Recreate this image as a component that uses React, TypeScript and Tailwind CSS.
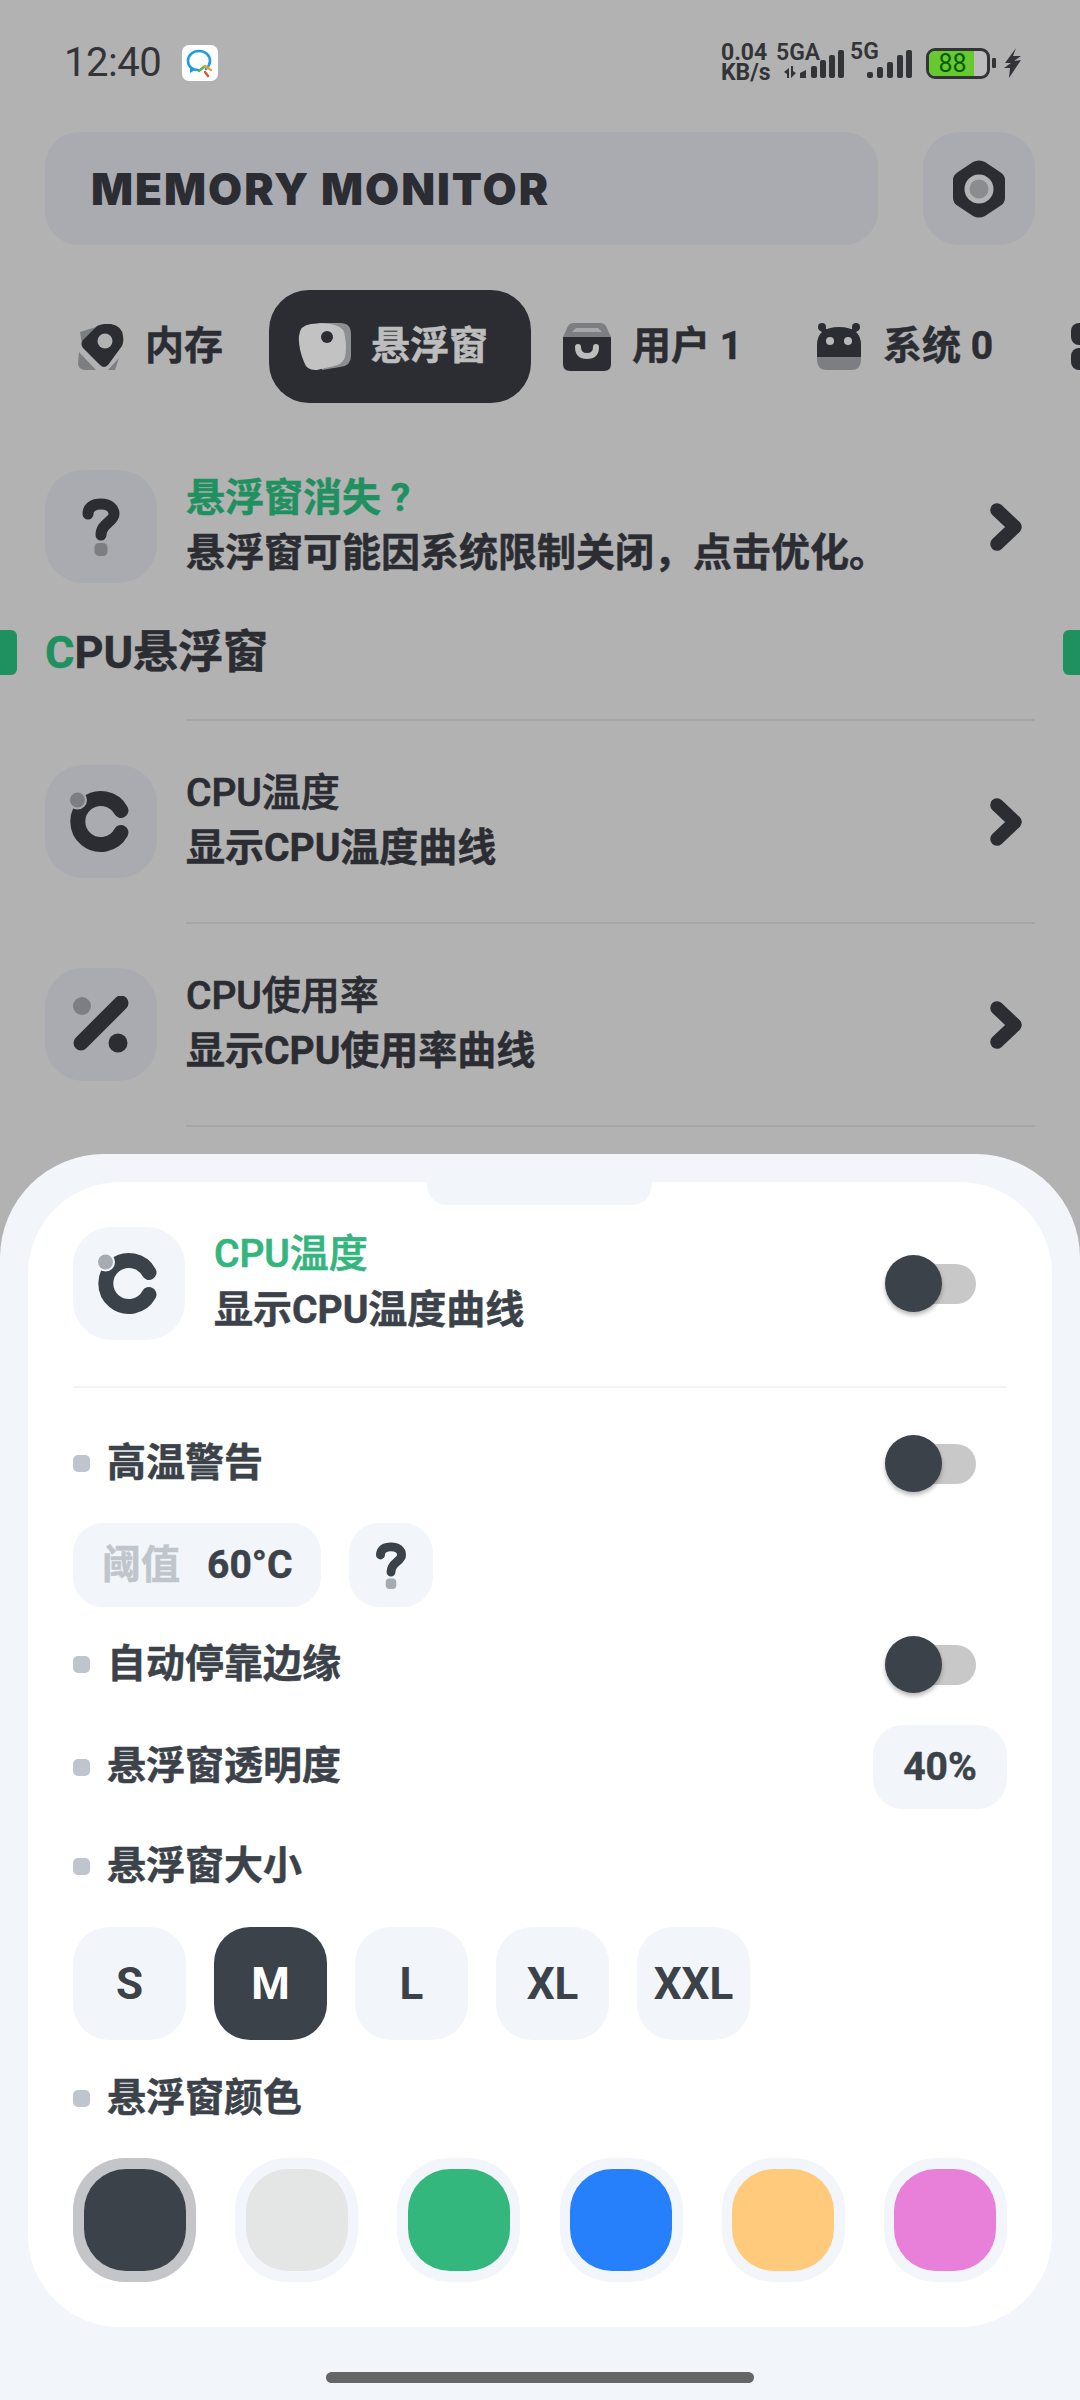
import type { ReactNode } from "react";

const FONT = "font-['Roboto','Noto_Sans_CJK_SC',sans-serif]";
const DIM_BG = "#b2b2b2";
const DARK = "#2b2d33";
const HEAVY = "font-bold [-webkit-text-stroke:0.5px_currentColor]";
const MEDIUM = "font-medium [-webkit-text-stroke:0.7px_currentColor]";

function Chevron() {
  return (
    <svg viewBox="0 0 33 48" className="h-[48px] w-[33px] shrink-0">
      <path d="M7 7 L25 24 L7 41" fill="none" stroke={DARK} strokeWidth="13.5" strokeLinecap="round" strokeLinejoin="round" />
    </svg>
  );
}

function QuestionIcon({ color, dot, className }: { color: string; dot: string; className: string }) {
  return (
    <svg viewBox="0 0 38 58" className={className}>
      <path d="M6 16 C6 9 11 6 19 6 C27 6 32 10 32 16 C32 24 19 25 19 37" fill="none" stroke={color} strokeWidth="11" strokeLinecap="round" strokeLinejoin="round" />
      <rect x="12.5" y="45" width="13" height="13" rx="4.5" fill={dot} />
    </svg>
  );
}

function TempIcon({ color, dot, ring }: { color: string; dot: string; ring: string }) {
  return (
    <svg viewBox="0 0 60 61" className="h-[61px] w-[60px] overflow-visible">
      <path d="M50 19.5 A 23 23 0 1 0 50 41.5" fill="none" stroke={color} strokeWidth="15" strokeLinecap="round" />
      <circle cx="6.5" cy="9" r="9.5" fill={ring} />
      <circle cx="6.5" cy="9" r="7.5" fill={dot} />
    </svg>
  );
}

function PercentIcon() {
  return (
    <svg viewBox="0 0 58 58" className="h-[58px] w-[58px]">
      <path d="M49 7 L9 47" stroke={DARK} strokeWidth="15" strokeLinecap="round" />
      <circle cx="10" cy="10" r="9" fill="#7d7e82" />
      <circle cx="46" cy="47" r="9.5" fill={DARK} />
    </svg>
  );
}

function IconBox({ children, bg }: { children: ReactNode; bg: string }) {
  return (
    <div className="flex h-[113px] w-[112px] shrink-0 items-center justify-center rounded-[38px]" style={{ backgroundColor: bg }}>
      {children}
    </div>
  );
}

function MemoryTabIcon() {
  return (
    <svg viewBox="0 0 46 46" className="h-[46px] w-[46px]">
      <path d="M2 8 L18 3 L4 21Z M1 28 L0 40 Q1 46 8 46 L18 46 Z M30 46 L37 46 L41 34 Z" fill="#7d7e82" />
      <path d="M19 2 Q26 -1 33 0 Q44 2 45 12 Q46 18 44 22 L30 41 Q26 45 22 41 L5 24 Q2 20 5 16 Z" fill={DARK} />
      <circle cx="27" cy="17" r="7.5" fill={DIM_BG} />
    </svg>
  );
}

function FloatTabIcon() {
  return (
    <svg viewBox="0 0 54 48" className="h-[48px] w-[54px]">
      <path d="M20 0 H42 Q53 0 53 11 V33 Q53 43 42 44 L24 47 Z" fill="#8d8e91" />
      <path d="M13 1 Q28 -1 37 2 Q47 5 47 14 Q49 24 47 34 Q45 41 36 43 L19 47 Q9 48 6 39 Q0 24 1 13 Q2 2 13 1Z" fill="#c2c2c2" />
      <circle cx="29" cy="14" r="6" fill={DARK} />
    </svg>
  );
}

function BagTabIcon() {
  return (
    <svg viewBox="0 0 48 48" className="h-[48px] w-[48px]">
      <path d="M11 0 H37 Q41 0 43 3 L48 14 H0 L5 3 Q7 0 11 0Z" fill="#7d7e82" />
      <path d="M13 5 H35 L39 9 H9Z" fill="#a8a8a8" />
      <path d="M0 14 H48 V41 Q48 48 41 48 H7 Q0 48 0 41Z" fill={DARK} />
      <path d="M15 24 Q15 33 24 33 Q33 33 33 24" fill="none" stroke="#bdbdbd" strokeWidth="6" strokeLinecap="round" />
    </svg>
  );
}

function RobotTabIcon() {
  return (
    <svg viewBox="0 0 44 47" className="h-[47px] w-[44px]">
      <circle cx="5" cy="4" r="4" fill={DARK} />
      <circle cx="39" cy="4" r="4" fill={DARK} />
      <path d="M4 5 L10 10 M40 5 L34 10" stroke={DARK} strokeWidth="5" />
      <path d="M0 34 V22 Q0 4 22 4 Q44 4 44 22 V34Z" fill={DARK} />
      <path d="M0 34 H44 V37 Q44 47 34 47 H10 Q0 47 0 37Z" fill="#7d7e82" />
      <circle cx="13" cy="18" r="4" fill="#b9b9b9" />
      <circle cx="31" cy="18" r="4" fill="#b9b9b9" />
    </svg>
  );
}

function HexIcon() {
  return (
    <svg viewBox="0 0 52 58" className="h-[58px] w-[52px]">
      <path d="M20 2 Q26 -1 32 2 L47 12 Q52 15 52 20 V38 Q52 43 47 46 L32 56 Q26 59 20 56 L5 46 Q0 43 0 38 V20 Q0 15 5 12Z" fill={DARK} />
      <circle cx="26" cy="29" r="14.5" fill="#b4b4b6" />
      <circle cx="26" cy="29" r="9.5" fill="#8b8c8f" />
    </svg>
  );
}

function AppBadge() {
  return (
    <div className="flex h-[36px] w-[36px] items-center justify-center rounded-[7px] bg-white">
      <svg viewBox="0 0 32 32" className="h-[32px] w-[32px]">
        <path d="M22 22 Q26 18 26 14 C26 8 21 4 15 4 C9 4 4 8 4 14 C4 20 9 23 14 23" fill="none" stroke="#1f9be0" strokeWidth="2.6" strokeLinecap="round" />
        <path d="M6 21 L6 26 L11 23" fill="#1f9be0" />
        <path d="M15 24 L21 19" stroke="#5bb548" strokeWidth="2.4" strokeLinecap="round" />
        <path d="M21 19 L27 23" stroke="#e9a23b" strokeWidth="2.4" strokeLinecap="round" />
        <path d="M21 25 L24 29" stroke="#e25241" strokeWidth="2.4" strokeLinecap="round" />
      </svg>
    </div>
  );
}

function StatusIcons() {
  return (
    <div className="flex items-center text-[#333438]">
      <div className="flex w-[50px] flex-col text-[23px] leading-[20px] font-bold">
        <span>0.04</span>
        <span>KB/s</span>
      </div>
      <div className="relative ml-[12px] h-[37px] w-[61px]">
        <span className="absolute top-[-3px] left-[-7px] text-[23px] leading-[22px] font-semibold">5GA</span>
        <svg viewBox="0 0 61 37" className="h-[37px] w-[61px]" fill="#333438">
          <path d="M1 27 L6 23 V33 H4 V29Z M8 21 V33 L13 28 L10 26 V21Z" />
          <path d="M17 33 V28 L23 25 V33Z" />
          <rect x="28" y="21" width="6" height="12" rx="2" />
          <rect x="37" y="15" width="6" height="18" rx="2" />
          <rect x="46" y="10" width="6" height="23" rx="2" />
          <rect x="55" y="5" width="6" height="28" rx="2" />
        </svg>
      </div>
      <div className="relative ml-[7px] h-[37px] w-[62px]">
        <span className="absolute top-[-4px] left-[-1px] text-[23px] leading-[22px] font-semibold">5G</span>
        <svg viewBox="0 0 62 37" className="h-[37px] w-[62px]" fill="#333438">
          <rect x="16" y="27" width="6" height="6" rx="2" />
          <rect x="26" y="22" width="6" height="11" rx="2" />
          <rect x="36" y="17" width="6" height="16" rx="2" />
          <rect x="46" y="10" width="6" height="23" rx="2" />
          <rect x="55" y="5" width="6" height="28" rx="2" />
        </svg>
      </div>
      <div className="ml-[13px] flex items-center">
        <div className="relative h-[31px] w-[64px] overflow-hidden rounded-[9px] border-[3px] border-[#333438] bg-[#bdbdbd]">
          <div className="flex h-full w-[45px] items-center justify-center bg-[#66c92f] pl-[2px] text-[25px] leading-none font-normal text-[#0c5a08]">88</div>
        </div>
        <div className="ml-[2px] h-[10px] w-[4px] rounded-[1px] bg-[#333438]" />
      </div>
      <svg viewBox="0 0 18 30" className="ml-[8px] h-[30px] w-[18px]" fill="#333438">
        <path d="M12 0 L1 15 L7 15 L0 20 L6 20 L5 30 L17 12 L10 13 L17 8 L9 8Z" />
      </svg>
    </div>
  );
}

function Tab({ icon, label, active, iconGap = "ml-[21px]", rightPad = "pr-[46px]" }: { icon: ReactNode; label: string; active?: boolean; iconGap?: string; rightPad?: string }) {
  return (
    <div className={`flex h-[113px] shrink-0 items-center rounded-[40px] ${rightPad} ${active ? "bg-[#2b2d33] pl-[29px] text-[#bdbdbd]" : "pl-[32px] text-[#2b2d33]"}`}>
      {icon}
      <span className={`${iconGap} text-[39px] leading-none whitespace-nowrap ${HEAVY}`}>{label}</span>
    </div>
  );
}

function ListRow({ icon, title, subtitle, titleClass }: { icon: ReactNode; title: ReactNode; subtitle: string; titleClass: string }) {
  return (
    <div className="flex h-[113px] items-center px-[45px]">
      <IconBox bg="#a9abb0">{icon}</IconBox>
      <div className="ml-[29px] flex flex-1 flex-col pb-[2px] text-[39px] leading-[55px] text-[#2b2d33]">
        <span className={titleClass}>{title}</span>
        <span className={HEAVY}>{subtitle}</span>
      </div>
      <div className="mr-[12px]">
        <Chevron />
      </div>
    </div>
  );
}

function Toggle() {
  return (
    <div className="relative mr-[31px] h-[57px] w-[91px] shrink-0">
      <div className="absolute top-[9px] right-0 h-[40px] w-[70px] rounded-full bg-[#c8c8c8]" />
      <div className="absolute top-0 left-0 h-[57px] w-[57px] rounded-full bg-[#3c4249] shadow-[0_3px_4px_rgba(0,0,0,0.28)]" />
    </div>
  );
}

function SettingLabel({ text }: { text: string }) {
  return (
    <div className="flex items-center">
      <div className="h-[17px] w-[17px] rounded-[5px] bg-[#bec5cd]" />
      <span className={`ml-[17px] pb-[1px] text-[39px] leading-none text-[#3c4249] ${HEAVY}`}>{text}</span>
    </div>
  );
}

const SIZES = ["S", "M", "L", "XL", "XXL"];
const SWATCHES = ["bg-[#3c4249]", "bg-[#e4e5e5]", "bg-[#34b77d]", "bg-[#2680fb]", "bg-[#ffca7c]", "bg-[#e87fd8]"];

function FloatSheet() {
  return (
    <div className="absolute inset-x-0 top-[1154px] bottom-0 rounded-t-[104px] bg-[#f2f6fb] px-[28px] pt-[28px]">
      <div className="relative h-[1145px] rounded-[92px] bg-white px-[45px] pt-[45px]">
        <div className="absolute top-0 left-[399px] h-[23px] w-[225px] rounded-b-[20px] bg-[#f2f6fb]" />

        <div className="flex h-[113px] items-center">
          <IconBox bg="#f2f6fb">
            <TempIcon color="#3c4249" dot="#a6abb2" ring="#f2f6fb" />
          </IconBox>
          <div className="ml-[29px] flex flex-1 flex-col pb-[4px] text-[39px] leading-[56px]">
            <span className={`text-[#35b57e] ${MEDIUM}`}>CPU温度</span>
            <span className={`text-[#3c4249] ${HEAVY}`}>显示CPU温度曲线</span>
          </div>
          <Toggle />
        </div>

        <div className="mt-[46px] h-[2px] bg-[#f2f5f8]" />

        <div className="mt-[47px] flex h-[57px] items-center justify-between">
          <SettingLabel text="高温警告" />
          <Toggle />
        </div>

        <div className="mt-[31px] flex gap-[28px]">
          <div className={`flex h-[84px] w-[248px] items-center rounded-[30px] bg-[#f2f6fb] pl-[29px] text-[39px] leading-none ${HEAVY}`}>
            <span className="text-[#c0c5cc]">阈值</span>
            <span className="ml-[27px] text-[#3c4249]">60°C</span>
          </div>
          <div className="flex h-[84px] w-[84px] items-center justify-center rounded-[30px] bg-[#f2f6fb]">
            <QuestionIcon color="#3c4249" dot="#a6abb2" className="h-[47px] w-[32px]" />
          </div>
        </div>

        <div className="mt-[29px] flex h-[57px] items-center justify-between">
          <SettingLabel text="自动停靠边缘" />
          <Toggle />
        </div>

        <div className="mt-[32px] flex h-[84px] items-center justify-between">
          <SettingLabel text="悬浮窗透明度" />
          <div className={`flex h-[84px] w-[134px] items-center justify-center rounded-[30px] bg-[#f2f6fb] text-[39px] leading-none text-[#3c4249] ${HEAVY}`}>40%</div>
        </div>

        <div className="mt-[29px] flex h-[57px] items-center">
          <SettingLabel text="悬浮窗大小" />
        </div>

        <div className="mt-[32px] flex gap-[28px]">
          {SIZES.map((size) => (
            <div
              key={size}
              className={`flex h-[113px] w-[113px] items-center justify-center rounded-[36px] text-[44px] leading-none font-bold ${size === "M" ? "bg-[#3c4249] text-white" : "bg-[#f2f6fb] text-[#3c4249]"}`}
            >
              {size}
            </div>
          ))}
        </div>

        <div className="mt-[30px] flex h-[57px] items-center">
          <SettingLabel text="悬浮窗颜色" />
        </div>

        <div className="mt-[31px] flex justify-between">
          {SWATCHES.map((swatch, i) => (
            <div key={swatch} className={`flex h-[124px] w-[123px] items-center justify-center rounded-[52px] ${i === 0 ? "bg-[#c3c5c8]" : "bg-[#f2f6fb]"}`}>
              <div className={`h-[102px] w-[102px] rounded-[42px] ${swatch}`} />
            </div>
          ))}
        </div>
      </div>
      <div className="mx-auto mt-[45px] h-[11px] w-[428px] rounded-full bg-[#646668]" />
    </div>
  );
}

export default function App() {
  return (
    <div className={`relative h-[2400px] w-[1080px] overflow-hidden bg-[#b2b2b2] ${FONT}`}>
      <div className="flex h-[126px] items-center justify-between pr-[58px] pl-[64px]">
        <div className="flex items-center">
          <span className="text-[40px] leading-none tracking-[-0.5px] text-[#333438]">12:40</span>
          <div className="ml-[21px]">
            <AppBadge />
          </div>
        </div>
        <StatusIcons />
      </div>

      <div className="mt-[6px] flex gap-[45px] px-[45px]">
        <div className="flex h-[113px] flex-1 items-center rounded-[34px] bg-[#a9abb0] pl-[46px]">
          <span className="font-['Inter',sans-serif] text-[44px] leading-none font-black tracking-[2px] text-[#2b2d33]">MEMORY MONITOR</span>
        </div>
        <div className="flex h-[113px] w-[112px] items-center justify-center rounded-[36px] bg-[#a9abb0]">
          <HexIcon />
        </div>
      </div>

      <div className="mt-[45px] flex overflow-hidden pl-[46px]">
        <Tab icon={<MemoryTabIcon />} label="内存" />
        <Tab active icon={<FloatTabIcon />} label="悬浮窗" iconGap="ml-[19px]" rightPad="pr-[43px]" />
        <Tab icon={<BagTabIcon />} label="用户 1" rightPad="pr-[43px]" />
        <Tab icon={<RobotTabIcon />} label="系统 0" iconGap="ml-[22px]" />
        <div className="ml-[-3px] flex w-[40px] shrink-0 flex-col justify-center gap-[3px] pl-[35px]">
          <div className="h-[22px] w-[40px] shrink-0 rounded-[8px] bg-[#2b2d33]" />
          <div className="h-[22px] w-[40px] shrink-0 rounded-[8px] bg-[#2b2d33]" />
        </div>
      </div>

      <div className="mt-[67px]">
        <ListRow
          icon={<QuestionIcon color={DARK} dot="#7d7e82" className="h-[58px] w-[38px]" />}
          title="悬浮窗消失 ?"
          subtitle="悬浮窗可能因系统限制关闭，点击优化。"
          titleClass={`text-[#1f9060] ${HEAVY}`}
        />
      </div>

      <div className="mt-[47px] flex h-[45px] items-center justify-between">
        <div className="h-[45px] w-[17px] rounded-r-[6px] bg-[#1f9060]" />
        <div className={`ml-[28px] flex-1 text-[45px] leading-none text-[#2b2d33] ${HEAVY}`}>
          <span className="text-[#1f9060]">C</span>PU悬浮窗
        </div>
        <div className="h-[45px] w-[17px] rounded-l-[6px] bg-[#1f9060]" />
      </div>

      <div className="mt-[44px] mr-[45px] ml-[186px] h-[2px] bg-[#a6a6a6]" />
      <div className="mt-[44px]">
        <ListRow icon={<TempIcon color={DARK} dot="#7d7e82" ring="#a9abb0" />} title="CPU温度" subtitle="显示CPU温度曲线" titleClass={MEDIUM} />
      </div>
      <div className="mt-[44px] mr-[45px] ml-[186px] h-[2px] bg-[#a6a6a6]" />
      <div className="mt-[44px]">
        <ListRow icon={<PercentIcon />} title="CPU使用率" subtitle="显示CPU使用率曲线" titleClass={MEDIUM} />
      </div>
      <div className="mt-[44px] mr-[45px] ml-[186px] h-[2px] bg-[#a6a6a6]" />

      <FloatSheet />
    </div>
  );
}
